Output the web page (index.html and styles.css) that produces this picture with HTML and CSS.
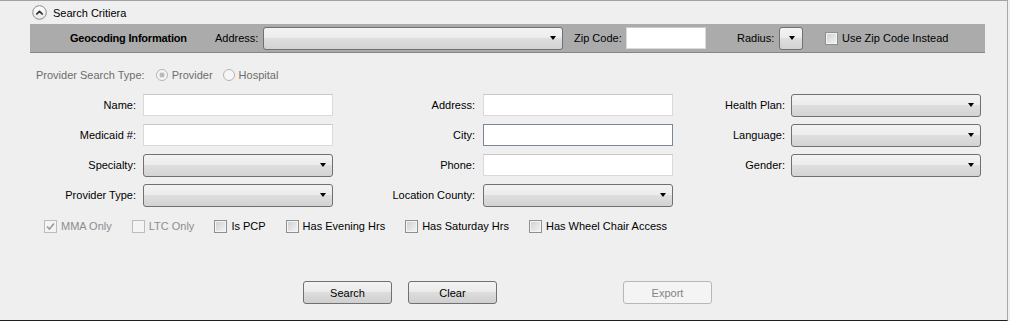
FILE: index.html
```html
<!DOCTYPE html>
<html>
<head>
<meta charset="utf-8">
<link rel="stylesheet" href="styles.css">
</head>
<body>
<div class="frame">
  <div class="header">
    <svg class="collapse" width="15" height="15" viewBox="0 0 15 15">
      <defs><linearGradient id="cg" x1="0" y1="0" x2="0" y2="1"><stop offset="0" stop-color="#ffffff"/><stop offset="1" stop-color="#e6e6e6"/></linearGradient></defs>
      <circle cx="7.5" cy="7.5" r="6.8" fill="url(#cg)" stroke="#8c8c8c" stroke-width="1"/>
      <path d="M4.8 9 L7.5 6.3 L10.2 9" fill="none" stroke="#2a2a2a" stroke-width="1.7" stroke-linecap="round" stroke-linejoin="round"/>
    </svg>
    <span class="title">Search Critiera</span>
  </div>

  <div class="geobar">
    <span class="geo-title">Geocoding Information</span>
    <span class="geo-lbl w-addr">Address:</span>
    <div class="combo geo-combo"><span class="arrow"></span></div>
    <span class="geo-lbl w-zip">Zip Code:</span>
    <div class="tb geo-zip"></div>
    <span class="geo-lbl w-rad">Radius:</span>
    <div class="combo geo-radius"><span class="arrow"></span></div>
    <label class="chk geo-chk"><span class="box"></span><span>Use Zip Code Instead</span></label>
  </div>

  <div class="typerow">
    <span class="type-lbl">Provider Search Type:</span>
    <span class="radio checked"></span><span class="rtext">Provider</span>
    <span class="radio second"></span><span class="rtext">Hospital</span>
  </div>

  <div class="grid">
    <span class="lbl l1">Name:</span><div class="tb"></div>
    <span class="lbl l2">Address:</span><div class="tb"></div>
    <span class="lbl l3">Health Plan:</span><div class="combo"><span class="arrow"></span></div>

    <span class="lbl l1">Medicaid #:</span><div class="tb"></div>
    <span class="lbl l2">City:</span><div class="tb focus"></div>
    <span class="lbl l3">Language:</span><div class="combo"><span class="arrow"></span></div>

    <span class="lbl l1">Specialty:</span><div class="combo"><span class="arrow"></span></div>
    <span class="lbl l2">Phone:</span><div class="tb"></div>
    <span class="lbl l3">Gender:</span><div class="combo"><span class="arrow"></span></div>

    <span class="lbl l1">Provider Type:</span><div class="combo"><span class="arrow"></span></div>
    <span class="lbl l2">Location County:</span><div class="combo"><span class="arrow"></span></div>
  </div>

  <div class="chkrow">
    <label class="chk disabled"><span class="box checked"><svg width="11" height="11" viewBox="0 0 11 11"><path d="M2 5.5 L4.4 8 L9 2.5" fill="none" stroke="#9a9a9a" stroke-width="1.6"/></svg></span><span>MMA Only</span></label>
    <label class="chk disabled"><span class="box"></span><span>LTC Only</span></label>
    <label class="chk"><span class="box"></span><span>Is PCP</span></label>
    <label class="chk"><span class="box"></span><span>Has Evening Hrs</span></label>
    <label class="chk"><span class="box"></span><span>Has Saturday Hrs</span></label>
    <label class="chk"><span class="box"></span><span>Has Wheel Chair Access</span></label>
  </div>

  <div class="buttons">
    <div class="btn b-search">Search</div>
    <div class="btn b-clear">Clear</div>
    <div class="btn b-export disabled">Export</div>
  </div>
</div>
</body>
</html>
```

FILE: styles.css
```css
* { box-sizing: border-box; }
html, body { margin: 0; padding: 0; background: #efefef; }
body { font-family: "Liberation Sans", Arial, sans-serif; font-size: 11px; color: #000; }

.frame {
  width: 1008px;
  height: 321px;
  border-top: 1px solid #a3a3a3;
  border-right: 1px solid #a8a8a8;
  border-bottom: 1px solid #1e1e1e;
  background: #efefef;
  overflow: hidden;
}

.header {
  height: 23px;
  display: flex;
  align-items: center;
  padding-left: 32px;
}
.collapse { display: block; margin-top: 0; }
.title { margin-left: 6px; font-size: 11px; }

.geobar {
  margin-left: 30px;
  width: 955px;
  height: 29px;
  background: #ababab;
  border-bottom: 1px solid #858585;
  display: flex;
  align-items: center;
  padding-left: 40px;
}
.geo-title { font-weight: bold; width: 145px; flex: none; letter-spacing: -0.2px; }
.geo-lbl { flex: none; }
.w-addr { width: 48px; }
.w-zip { width: 52px; margin-left: 11px; }
.w-rad { width: 42px; margin-left: 31px; }
.geo-combo { width: 300px; height: 17px; flex: none; }
.geo-zip { width: 80px; height: 18px; flex: none; border-color: #e6e6e6; }
.geo-radius { width: 24px; height: 17px; flex: none; }
.geo-chk { margin-left: 22px; }

.typerow {
  margin-top: 15px;
  height: 14px;
  display: flex;
  align-items: center;
  padding-left: 36px;
  color: #6d6d6d;
}
.type-lbl { margin-right: 11px; }
.radio {
  width: 12px; height: 12px;
  border-radius: 50%;
  border: 1px solid #b5b5b5;
  background: #f6f6f6;
  flex: none;
  position: relative;
}
.radio.checked {
  background: radial-gradient(circle, #b8b8b8 0 2px, #e2e2e2 2.5px 3px, #f6f6f6 3.5px);
}
.radio.second { margin-left: 10px; }
.rtext { margin-left: 4px; }

.grid {
  margin-top: 12px;
  display: grid;
  grid-template-columns: 143px 190px 150px 190px 118px 190px;
  grid-auto-rows: 22px;
  row-gap: 8px;
  align-items: center;
}
.lbl { text-align: right; white-space: nowrap; }
.l1 { padding-right: 7px; }
.l2 { padding-right: 8px; }
.l3 { padding-right: 6px; }

.tb {
  height: 22px;
  background: #fff;
  border: 1px solid #dadada;
  border-top-color: #c8c8c8;
}
.tb.focus { border-color: #7b8795; }

.combo {
  height: 23px;
  border: 1px solid #707070;
  border-radius: 3px;
  background: linear-gradient(#f3f3f3 0%, #ececec 45%, #dedede 50%, #d3d3d3 100%);
  position: relative;
}
.arrow {
  position: absolute;
  right: 6px;
  top: 50%;
  margin-top: -2px;
  width: 0; height: 0;
  border-left: 3.5px solid transparent;
  border-right: 3.5px solid transparent;
  border-top: 4px solid #000;
}
.geo-radius .arrow { right: 7px; }

.chkrow {
  margin-top: 13px;
  height: 14px;
  padding-left: 44px;
  display: flex;
  align-items: center;
  gap: 20px;
}
.chk { display: flex; align-items: center; white-space: nowrap; }
.box {
  width: 13px; height: 13px;
  border: 1px solid #8e8f8f;
  background: linear-gradient(135deg, #cfcfcf, #f5f5f5);
  box-shadow: inset 0 0 0 1px #f4f4f4;
  margin-right: 4px;
  flex: none;
  display: flex; align-items: center; justify-content: center;
}
.chk.disabled { color: #8d8d8d; }
.chk.disabled .box { border-color: #bcbcbc; background: #f4f4f4; box-shadow: none; }
.box svg { display: block; }

.buttons {
  margin-top: 48px;
  display: flex;
  padding-left: 303px;
}
.btn {
  width: 89px; height: 23px;
  border: 1px solid #707070;
  border-radius: 3px;
  background: linear-gradient(#f3f3f3 0%, #ebebeb 45%, #dddddd 50%, #cfcfcf 100%);
  display: flex; align-items: center; justify-content: center;
}
.b-clear { margin-left: 16px; }
.b-export { margin-left: 126px; }
.btn.disabled { border-color: #b7b7b7; background: #f4f4f4; color: #838383; }
```
